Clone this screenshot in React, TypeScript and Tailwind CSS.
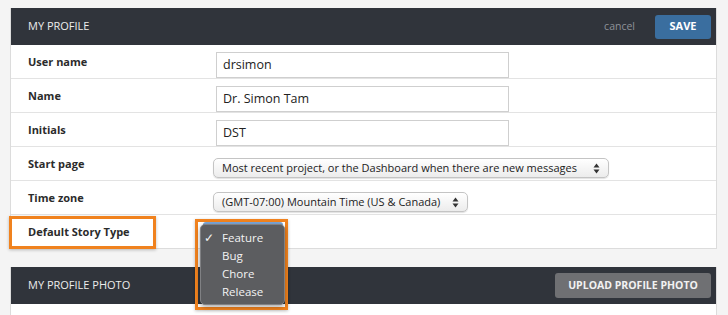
import React from "react";

const font = { fontFamily: '"Open Sans", "Liberation Sans", sans-serif' };

function Arrows() {
  return (
    <svg width="7" height="11" viewBox="0 0 7 11" className="shrink-0">
      <path d="M3.5 0.5 L6.5 4.5 L0.5 4.5 Z" fill="#333" />
      <path d="M3.5 10.5 L6.5 6.5 L0.5 6.5 Z" fill="#333" />
    </svg>
  );
}

function Row({ label, children }: { label: string; children?: React.ReactNode }) {
  return (
    <div className="flex h-[34px] border-b border-[#e3e3e3]">
      <div className="w-[202px] shrink-0 pl-[17px] pt-[8px] text-[11px] font-bold leading-[17px] text-[#2b2b2b]">
        {label}
      </div>
      <div className="flex-1">{children}</div>
    </div>
  );
}

function TextInput({ value }: { value: string }) {
  return (
    <div className="mt-[7px] ml-[3px] flex h-[26px] w-[293px] items-center border border-[#cfcfcf] bg-white px-[6px] text-[12.5px] text-[#222]">
      {value}
    </div>
  );
}

function Select({ value, width }: { value: string; width: string }) {
  return (
    <div
      className={`mt-[11px] flex h-[20px] ${width} items-center justify-between whitespace-nowrap rounded-[5px] border border-[#c4c4c4] bg-gradient-to-b from-[#ffffff] to-[#ececec] pl-[8px] pr-[8px] text-[11px] text-[#222] shadow-[0_1px_1px_rgba(0,0,0,0.12)]`}
    >
      <span>{value}</span>
      <Arrows />
    </div>
  );
}

export default function App() {
  return (
    <div className="relative h-[315px] w-[728px] overflow-hidden bg-[#f4f4f4] pl-[10px] pt-[8px]" style={font}>
      <div className="w-[707px] border-x border-b border-[#dcdcdc] bg-white">
        <div className="flex h-[37px] items-center justify-between bg-[#30343b] pl-[17px] pr-[5px]">
          <span className="text-[11px] text-[#ececec]">MY PROFILE</span>
          <div className="flex items-center">
            <span className="mr-[20px] text-[10.5px] text-[#8e9298]">cancel</span>
            <div className="flex h-[24px] w-[56px] items-center justify-center rounded-[3px] bg-[#3a6e9f] text-[11px] font-bold text-white">
              SAVE
            </div>
          </div>
        </div>
        <Row label="User name">
          <TextInput value="drsimon" />
        </Row>
        <Row label="Name">
          <TextInput value="Dr. Simon Tam" />
        </Row>
        <Row label="Initials">
          <TextInput value="DST" />
        </Row>
        <Row label="Start page">
          <Select width="w-[396px]" value="Most recent project, or the Dashboard when there are new messages" />
        </Row>
        <Row label="Time zone">
          <Select width="w-[255px]" value="(GMT-07:00) Mountain Time (US & Canada)" />
        </Row>
        <div className="flex h-[33px]">
          <div className="w-[202px] shrink-0 pl-[17px] pt-[8px] text-[11px] font-bold leading-[17px] text-[#2b2b2b]">
            Default Story Type
          </div>
        </div>
      </div>

      <div className="mt-[18px] w-[707px] border-x border-[#dcdcdc] bg-white">
        <div className="flex h-[37px] items-center justify-between bg-[#30343b] pl-[17px] pr-[5px]">
          <span className="text-[11px] text-[#ececec]">MY PROFILE PHOTO</span>
          <div className="flex h-[25px] w-[156px] items-center justify-center rounded-[3px] bg-[#6f7073] text-[10.5px] font-bold text-[#f2f2f2]">
            UPLOAD PROFILE PHOTO
          </div>
        </div>
        <div className="h-[20px]" />
      </div>

      {/* highlight around label */}
      <div className="absolute left-[9px] top-[216px] h-[33px] w-[147px] border-[3px] border-[#f0821e] shadow-[0_1px_3px_rgba(0,0,0,0.25)]" />

      {/* highlight around menu */}
      <div className="absolute left-[195px] top-[219px] h-[91px] w-[93px] border-[3px] border-[#f0821e] shadow-[0_1px_3px_rgba(0,0,0,0.25)]" />
      <div className="absolute left-[203px] top-[222px] h-[4px] w-[80px] rounded-t-[3px] bg-[#7aa6d8]" />
      <div className="absolute left-[200px] top-[224px] h-[81px] w-[85px] rounded-[5px] border border-[#808184] bg-[#5c5d60] pt-[4px] text-[11.5px] leading-[18px] text-[#f3f3f3] shadow-[0_2px_5px_rgba(0,0,0,0.35)]">
        <div className="relative pl-[21px]">
          <span className="absolute left-[3px] top-0">✓</span>
          Feature
        </div>
        <div className="pl-[21px]">Bug</div>
        <div className="pl-[21px]">Chore</div>
        <div className="pl-[21px]">Release</div>
      </div>
    </div>
  );
}
